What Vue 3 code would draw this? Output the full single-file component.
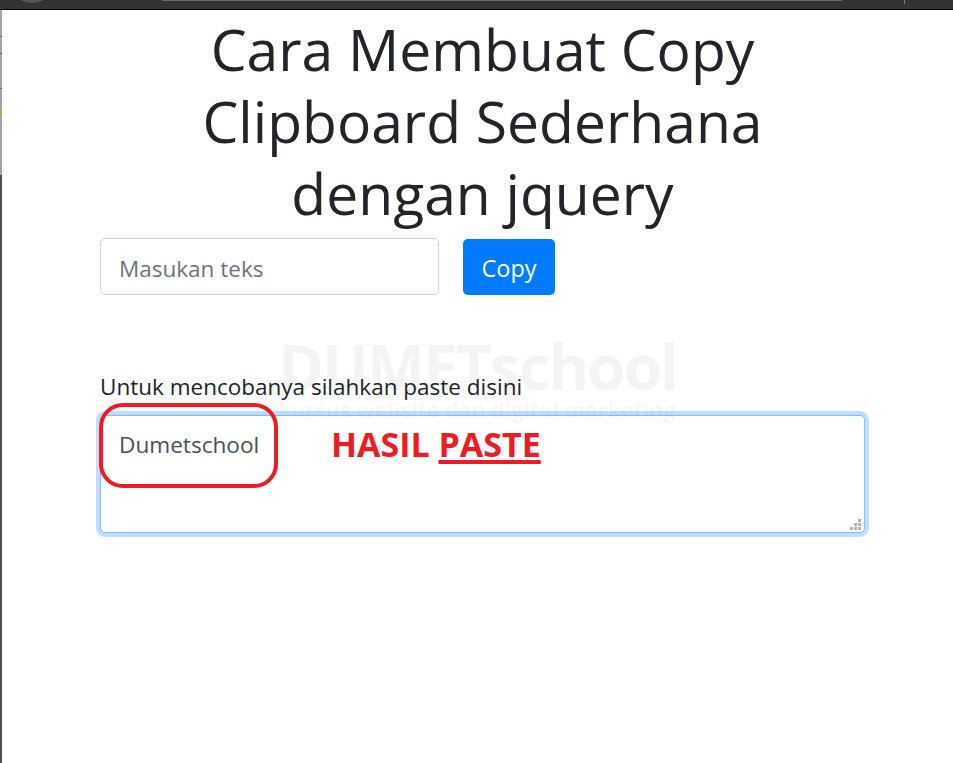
<template>
  <div class="page">
    <div class="topbar">
      <span class="avatar"></span>
      <span class="address"></span>
      <span class="divider"></span>
    </div>
    <div class="side"></div>
    <main class="content">
      <h1 class="title">Cara Membuat Copy Clipboard Sederhana dengan jquery</h1>
      <div class="copy-row">
        <input class="field" type="text" placeholder="Masukan teks" />
        <button class="btn" type="button">Copy</button>
      </div>
      <div class="paste-block">
        <label class="paste-label">Untuk mencobanya silahkan paste disini</label>
        <div class="area-wrap">
          <textarea class="area" v-model="pasted"></textarea>
          <svg class="grip" width="11" height="11" viewBox="0 0 11 11">
            <rect v-for="d in gripDots" :key="d.join()" :x="d[0]" :y="d[1]" width="3" height="3" />
          </svg>
          <span class="ring"></span>
          <span class="note">HASIL <u>PASTE</u></span>
        </div>
        <div class="watermark">
          <div class="wm-name">DUMETschool</div>
          <div class="wm-sub">kursus website dan digital marketing</div>
        </div>
      </div>
    </main>
  </div>
</template>

<script setup>
import { ref } from 'vue'

const pasted = ref('Dumetschool')
const gripDots = [[8, 0], [4, 4], [8, 4], [0, 8], [4, 8], [8, 8]]
</script>

<style>
html,
body {
  margin: 0;
  background: #fff;
}
</style>

<style scoped>
.page {
  position: relative;
  width: 953px;
  height: 763px;
  overflow: hidden;
  background: #fff;
  color: #212529;
  font-family: "Open Sans", "Noto Sans", sans-serif;
}

.topbar {
  position: relative;
  height: 9px;
  background: #333336;
  border-bottom: 1px solid #000;
}

.avatar {
  position: absolute;
  left: 17px;
  top: -14px;
  width: 30px;
  height: 17px;
  border-radius: 50%;
  background: #555;
}

.address {
  position: absolute;
  left: 162px;
  right: 111px;
  top: 0;
  height: 1px;
  background: #6b6b6b;
}

.divider {
  position: absolute;
  left: 904px;
  top: 0;
  width: 1px;
  height: 4px;
  background: #777;
}

.side {
  position: absolute;
  left: 0;
  top: 10px;
  bottom: 0;
  width: 2px;
  background: linear-gradient(
    to bottom,
    #a4a4a4 0 26px,
    #666 26px 27px,
    #a4a4a4 27px 43px,
    #666 43px 44px,
    #a4a4a4 44px 78px,
    #666 78px 79px,
    #a4a4a4 79px 100px,
    #d99a3a 100px 105px,
    #a4a4a4 105px 165px,
    #4f4f4f 165px
  );
}

.content {
  padding: 0 88px 0 100px;
}

.title {
  width: 620px;
  margin: 3px auto 0;
  font-size: 57px;
  font-weight: 400;
  line-height: 72px;
  text-align: center;
}

.copy-row {
  display: flex;
  align-items: center;
  gap: 24px;
  margin-top: 9px;
}

.field {
  box-sizing: border-box;
  width: 339px;
  height: 57px;
  padding: 3px 18px 0;
  border: 1px solid #ced4da;
  border-radius: 5px;
  font: inherit;
  font-size: 22.5px;
  color: #495057;
  outline: none;
}

.field::placeholder {
  color: #6c757d;
  opacity: 1;
}

.btn {
  width: 92px;
  height: 56px;
  padding: 2px 0 0;
  border: 0;
  border-radius: 5px;
  background: #007bff;
  color: #fff;
  font: inherit;
  font-size: 23.5px;
}

.paste-block {
  position: relative;
  margin-top: 75px;
}

.watermark {
  position: absolute;
  left: 178px;
  top: -36px;
  width: 397px;
  color: rgba(0, 0, 0, 0.045);
  font-weight: 700;
  text-align: center;
  white-space: nowrap;
  pointer-events: none;
}

.wm-name {
  font-size: 62px;
  line-height: 64px;
  letter-spacing: -2px;
}

.wm-sub {
  font-size: 21.4px;
  line-height: 24px;
}

.paste-label {
  position: relative;
  display: block;
  font-size: 22.5px;
  line-height: 33px;
}

.area-wrap {
  position: relative;
  margin-top: 12px;
  width: 765px;
  height: 118px;
}

.area {
  display: block;
  box-sizing: border-box;
  width: 100%;
  height: 100%;
  padding: 12px 18px;
  border: 1px solid #80bdff;
  border-radius: 5px;
  box-shadow: 0 0 0 4px rgba(0, 123, 255, 0.25);
  background: #fff;
  color: #495057;
  font: inherit;
  font-size: 22.6px;
  line-height: 33px;
  outline: none;
  resize: none;
}

.grip {
  position: absolute;
  right: 4px;
  bottom: 3px;
  fill: #b5b5b5;
}

.ring {
  position: absolute;
  left: -1px;
  top: -12px;
  width: 179px;
  height: 85px;
  box-sizing: border-box;
  border: 4px solid #ed1c24;
  border-radius: 24px;
  pointer-events: none;
}

.note {
  position: absolute;
  left: 231px;
  top: 8px;
  color: #ed1c24;
  font-size: 34px;
  font-weight: 700;
  line-height: 42px;
}

.note u {
  text-decoration-thickness: 4px;
  text-underline-offset: 3px;
}
</style>
